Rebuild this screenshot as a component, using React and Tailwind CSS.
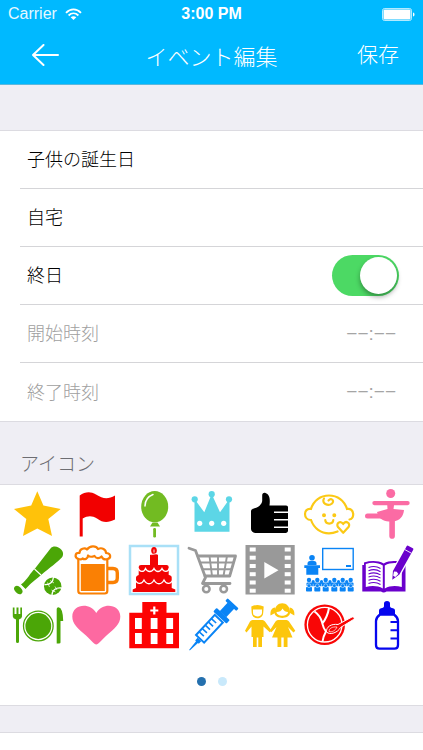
import { useState } from "react";

const Star = () => (
    <polygon fill="#ffc20a" points="25.3,2.3 31.4,16.5 48.7,20 36.3,30 40,47 25.3,39.5 11,47 14.3,30 2,20 19.2,16.5" />
);

const Flag = () => (
    <path fill="#f20000" d="M9.7 6.5C15 3 20 2 26 5.500C33 10 38 10.500 45 6.500V30.500C38 34 33 34 27 29.500C22 26.500 18 26.500 12.700 29.500V47.500H9.700Z" />
);

const Balloon = () => (
    <g>
        <ellipse cx="25.7" cy="17.7" rx="13.5" ry="15.6" fill="#72bb22" />
        <path d="M23.500 33.500H28.500L31 37.500H21Z" fill="#72bb22" />
        <rect x="24.200" y="39" width="2.800" height="9.500" rx="1.200" fill="#72bb22" />
        <path d="M16 17C16 11.500 19 7.500 24 5.500" fill="none" stroke="#fff" strokeWidth="1.500" strokeLinecap="round" />
    </g>
);

const Crown = () => (
    <g fill="#5cd6e6">
        <path d="M7.500 10L17.300 23.300L24.700 5L33 23.300L42.500 10V42.700H7.500Z" />
        <circle cx="7.700" cy="10.300" r="3.100" />
        <circle cx="24.700" cy="5.200" r="3.100" />
        <circle cx="42" cy="10.300" r="3.100" />
        <g fill="#fff">
            <circle cx="12.700" cy="34.300" r="2.600" />
            <circle cx="24.700" cy="34.300" r="2.600" />
            <circle cx="36.700" cy="34.300" r="2.600" />
        </g>
    </g>
);

const Thumb = () => (
    <g>
        <path d="M6 22.500C6 20.500 7 20 9 19.500C13 18.500 16.500 16 17.200 12V6.500C17.200 4.500 18.500 3.500 20.500 4C24 5 25.500 9 24.500 16.500H41C42.500 16.500 43 17.300 43 18.500V41.500C43 43 42 44 40.500 44H11C8 44 6 42 6 40Z" fill="#000" />
        <path d="M29 23.300H43.500M29 30.700H43.500M29 38.300H43.500" stroke="#fff" strokeWidth="1.600" />
    </g>
);

const Baby = () => (
    <g fill="none" stroke="#fbc915" strokeWidth="2.200" strokeLinecap="round">
        <path d="M7 20C9.500 11.500 16.500 6.500 25 6.500S40.500 11.500 43 20C50.500 18.500 51 30 45.500 30.500M7 20C-1 18.500 -1 31 7 31C10 39.500 17 44.300 25 44.300C28 44.300 31 43.500 33.500 42.500" />
        <path d="M20 9.500C17 14 24 18 28 14.500C31 11.500 27 8.500 24.500 11.500" />
        <path d="M21.300 31C21.500 35.700 29 35.700 29.300 31" />
        <circle cx="20" cy="26.300" r="0.900" fill="#fbc915" />
        <circle cx="30.300" cy="26.300" r="0.900" fill="#fbc915" />
        <path d="M39.200 43.800L34 38C31.500 34.500 36.500 30.800 39.200 35C42 30.800 47 34.500 44.500 38Z" strokeLinejoin="round" />
    </g>
);

const Ballerina = () => (
    <g fill="#fb6ba4">
        <circle cx="28.700" cy="4.500" r="4.500" />
        <rect x="10.300" y="12" width="37.400" height="4.200" rx="2.100" />
        <path d="M25 12.500H32.500L31.500 20L42 21C41.500 27 38 32 31 32.500C24 33 18 31 16 26L15 23L25.500 20Z" />
        <rect x="3" y="24.500" width="20" height="5" rx="2.500" />
        <rect x="27.300" y="28" width="5.600" height="21.700" rx="2.800" />
    </g>
);

const Baseball = () => (
    <g>
        <path d="M9 39.500C16 34 18 28 23 23.500L38.500 3.500C43 -2 54 5 50.500 11.500C49 14.500 33 26.500 28.500 30.500C23 35 19 38 13.500 44Z" fill="#4ba607" />
        <ellipse cx="6.300" cy="45" rx="4.800" ry="3.300" transform="rotate(45 6.300 45)" fill="#4ba607" />
        <path d="M22.500 24L29 30M8 40L13 45" stroke="#fff" strokeWidth="1.100" />
        <circle cx="40.700" cy="41.200" r="8.700" fill="#4ba607" />
        <path d="M32.500 39.500C38 40 41 37 41.500 32M49 43C44 42.500 40 45 40 50" fill="none" stroke="#fff" strokeWidth="1.300" />
        <path d="M35.500 37.500L37.500 42M38 35.500L42 38M39.500 45L43.500 47M43 41.500L45 45" stroke="#fff" strokeWidth="0.700" />
    </g>
);

const Beer = () => (
    <g fill="none" stroke="#fa8004" strokeWidth="2.200">
        <path d="M8.300 14V46C8.300 47.700 9.300 48.500 11 48.500H34.700C36.500 48.500 37.300 47.700 37.300 46V14" />
        <rect x="10.800" y="19" width="24" height="27" fill="#fa8004" stroke="none" />
        <path d="M37.500 23.500H43C46 23.500 47.300 25 47.300 28V33C47.300 36 46 37.500 43 37.500H37.500" strokeWidth="3.400" />
        <path d="M8.500 14C4 12.500 5 7.500 9.500 8C9.500 3.500 15 2.500 17 4.500C20 0.500 26 0.500 28 4C32 2 36 4.500 36 8C41 8 41.500 13 37.500 14C34 15.500 32 12.500 31.500 11.500C29 14 26 13.500 24.500 11C22 12 19.500 12 18 10.500C18 14 14.500 15 12.500 13.500C11.500 14.500 10 14.500 8.500 14Z" fill="#fff" strokeLinejoin="round" />
    </g>
);

const Cake = () => (
    <g>
        <path d="M3.700 47V44.500L7 43V32.500Q7 30.500 9.700 30V22Q9.700 20 12 20H21V9H29V20H37.500Q39.700 20 39.700 22V30Q42.700 30.500 42.700 32.500V43L46.300 44.500V47Z" fill="#f20303" />
        <ellipse cx="25" cy="5.500" rx="2.800" ry="3.500" fill="#f20303" />
        <path d="M25 7.500V4.500M21 9.300C24 10.500 27 7.500 29 9.800" stroke="#fff" strokeWidth="0.900" fill="none" />
        <g fill="none" stroke="#fff" strokeWidth="1.300">
            <path d="M9 23C10.500 27.500 15 27.500 16.500 23.500C18.500 27.500 23 27.500 25 23.500C27 27.500 31 27.500 33 23.500C35 27.500 39 27.500 40.500 23" />
            <path d="M6 34.500C8 39.500 13 39.500 15 35C17.500 40 22.500 40 25 35C27.500 40 32.500 40 35 35C37 39.500 42 39.500 44 34.500" />
        </g>
    </g>
);

const Cart = () => (
    <g fill="none" stroke="#999" strokeWidth="2.800" strokeLinejoin="round" strokeLinecap="round">
        <path d="M2 3.200L8.500 5.500L18.500 32.500L15.500 38.500H43" />
        <path d="M11 11H48.500L42.700 31H18" />
        <path d="M14 17.500H46M16 24.300H44M22.500 11L25 31M31 11V31M40 11L36.500 31" strokeWidth="1.900" />
        <circle cx="19.300" cy="44" r="3.300" strokeWidth="2.500" />
        <circle cx="36.700" cy="44" r="3.300" strokeWidth="2.500" />
    </g>
);

const Film = () => (
    <g>
        <rect x="0.500" y="0" width="49.200" height="49.500" fill="#999" />
        {[2.5, 10.7, 19, 27.2, 35.5, 43.7].map((y) => (
            <g key={y} fill="#fff">
                <rect x="4.700" y={y} width="6" height="4" />
                <rect x="39.700" y={y} width="6" height="4" />
            </g>
        ))}
        <polygon points="19.300,17 19.300,33.500 33.500,25.200" fill="#fff" />
    </g>
);

const Lecture = () => (
    <g fill="#0a84f5">
        <rect x="18.700" y="3.500" width="30.500" height="21" fill="none" stroke="#0a84f5" strokeWidth="1.400" />
        <rect x="42" y="20" width="5" height="2" />
        <circle cx="8" cy="12.800" r="2.800" />
        <path d="M3.500 20V18.500Q3.500 16 6 16H10Q12.500 16 12.500 18.500V20Z" />
        <path d="M0.300 20.300H16V23H14.300V29.700H2.300V23H0.300Z" />
        <rect x="2.500" y="37.500" width="47" height="3.700" rx="1" />
        {[5, 13.3, 21.7, 30.3, 38.7, 46.7].map((x) => (
            <g key={x}>
                <circle cx={x} cy="35" r="2.200" />
                <rect x={x - 3} y="42" width="6" height="4.500" rx="0.800" />
                <circle cx={x} cy="40.700" r="1.900" stroke="#fff" strokeWidth="0.500" />
            </g>
        ))}
        {[9.2, 17.5, 26, 34.5, 42.7].map((x) => (
            <circle key={x} cx={x} cy="36.700" r="1.600" />
        ))}
        <path d="M9.200 38.800V41.500M17.500 38.800V41.500M26 38.800V41.500M34.500 38.800V41.500M42.700 38.800V41.500" stroke="#fff" strokeWidth="0.500" />
    </g>
);

const Notebook = () => (
    <g fill="#6a00cc">
        <path d="M0.300 20H2V17.500C9 15.500 16 15.500 21.700 18.500C27 15.500 34 15.500 41.500 17.500V20H43.500V46.500H24.500Q21.700 48.500 19 46.500H0.300Z" />
        <path d="M3.800 19C10 17 16 17.500 20.800 20.500V43.500C16 40.500 9 40.500 3.800 42ZM22.800 20.500C28 17.500 34 17.500 39.800 19V42C34 40.500 28 40.500 22.800 43.500Z" fill="#fff" />
        <path d="M6.500 22.500Q13 20 18.500 23.500M6.500 25.700Q13 23.200 18.500 26.700M6.500 28.900Q13 26.400 18.500 29.900M6.500 32.100Q13 29.600 18.500 33.100M6.500 35.300Q13 32.800 18.500 36.300M6.500 38.500Q13 36 18.500 39.500" fill="none" stroke="#6a00cc" strokeWidth="1.100" />
        <g transform="translate(30.300 34.800) rotate(29)">
            <path d="M-5 -8V-38Q-5 -39 -4 -39H4Q5 -39 5 -38V-8L0 1Z" fill="#fff" />
            <path d="M-3.700 -8V-36.500Q-3.700 -37.500 -2.700 -37.500H2.700Q3.700 -37.500 3.700 -36.500V-8L0 0Z" />
            <path d="M-2.500 -8L0 -9.200L2.500 -8L1.200 -4H-1.200Z" fill="#fff" />
            <path d="M-3.700 -32.500H3.700" stroke="#fff" strokeWidth="0.800" />
        </g>
    </g>
);

const Meal = () => (
    <g fill="#4ba607">
        <path d="M0.800 6.500H2.500V13H4.500V6.500H6.500V13H8.300V6.500H10V15.500Q10 17.500 7 18.500V40.500Q7 42 5.500 42T4 40.500V18.500Q0.800 17.500 0.800 15.500Z" />
        <circle cx="26.300" cy="25" r="12.900" />
        <circle cx="26.300" cy="25" r="14.800" fill="none" stroke="#4ba607" strokeWidth="1.300" />
        <path d="M44.700 8Q44.700 6.300 46.500 6.300Q51 7 51.200 20H48.500V41.500Q48.500 42.500 47 42.500H44.700Z" />
    </g>
);

const Heart = () => (
    <path fill="#fd69a1" d="M26.300 43.500C24 43.500 22 40 16 34.500C8 27.500 2.300 23 2.300 15.500C2.300 3.500 19.500 0.500 26.300 12C33 0.500 50.300 3.500 50.300 15.500C50.300 23 44.500 27.500 36.500 34.500C30.500 40 28.500 43.500 26.300 43.500Z" />
);

const Hospital = () => (
    <g>
        <path d="M0.300 11.700H13.300V1H37.500V11.700H50V47.300H0.300Z" fill="#fd0202" />
        <path d="M25.300 5.500V13.500M21.300 9.500H29.300" stroke="#fff" strokeWidth="2.200" />
        {[6, 21.7, 37.3].map((x) => (
            <g key={x} fill="#fff">
                <rect x={x} y="17" width="6.800" height="11" />
                <rect x={x} y="32" width="6.800" height="11" />
            </g>
        ))}
    </g>
);

const Syringe = () => (
    <g transform="translate(25 25) rotate(43)" fill="#0a84f5">
        <path d="M-2.500 18.500H2.500V22H1.300L0.400 33H-0.400L-1.300 22H-2.500Z" />
        <rect x="-5.500" y="-10" width="11" height="27.500" fill="none" stroke="#0a84f5" strokeWidth="2" />
        <path d="M-5.500 -5H1M-5.500 -0.500H1M-5.500 4H1M-5.500 8.500H1M-5.500 13H1" stroke="#0a84f5" strokeWidth="1.600" />
        <rect x="-9" y="-16.500" width="18" height="5" rx="1" />
        <rect x="-4.500" y="-28" width="9" height="12" />
        <rect x="-7.500" y="-31" width="15" height="3.500" rx="1" />
    </g>
);

const Kids = () => (
    <g fill="#fcc60c">
        <path d="M6.300 5.500Q12.500 2.500 18.700 5.500L18.200 12C17.500 19 7.500 19 6.700 12Z" />
        <path d="M8 8.500H17V12C16.500 16.500 8.500 16.500 8 12Z" fill="#fff" />
        <path d="M7.500 19H17.500Q19 19 20 20.500L26.500 29.500L24.800 31.300L18.500 25.500V36H17V46H13.300V36.500H11.700V46H8V36H6.500V25.500L1.500 31.500L0 29.700L5 20.500Q6 19 7.500 19Z" />
        <path d="M29.500 12C29 -1 45.500 -1 45 12C44 18.500 30.500 18.500 29.500 12Z" />
        <path d="M31.500 11Q36 11 37.500 7.500Q39.500 11 43 11C42.500 16 32 16 31.500 11Z" fill="#fff" />
        <path d="M30 6.500C26.500 7 25 10 25.500 14.500L30 12ZM44.500 6.500C48 7 50 10 49.300 14.500L45 12Z" />
        <path d="M33 19H41.500Q43 19 44 20.500L50.300 29.700L48.500 31.500L43 26L47.500 36.500H42.500V46H38.700V36.500H36.300V46H32.500V36.500H27L31.500 26L26.300 31.300L24.800 29.500L30.500 20.500Q31.500 19 33 19Z" />
    </g>
);

const BabyFood = () => (
    <g>
        <circle cx="20.700" cy="23.700" r="20.300" fill="#f90606" />
        <circle cx="20.700" cy="23.700" r="17.300" fill="none" stroke="#fff" strokeWidth="1.300" />
        <path d="M10.500 10.500C14 13 16.500 16 18 21C19 25 19 27 22 30.500C20 34 19 36 18.500 40.500M18 23C22 18 24 13 25 7" fill="none" stroke="#fff" strokeWidth="2" />
        <path d="M22.500 31C22 26 27 22.500 34 23.500L48 16C50 15.500 51 17.500 49.500 18.500L36.500 26.500C34 31.500 26 34.500 22.500 31Z" fill="#f90606" stroke="#fff" strokeWidth="1" />
        <path d="M25 30.500C25 27.500 28 25.500 33 26C31.500 29.500 28 31.500 25 30.500Z" fill="none" stroke="#fff" strokeWidth="0.700" />
    </g>
);

const Bottle = () => (
    <g>
        <path d="M17 13V9.500Q17 7.500 19 7.300Q22 7 22 5V2.500Q22 0 25 0T28 2.500V5Q28 7 31 7.300Q33 7.500 33 9.500V13Z" fill="#0606ee" />
        <path d="M18 13.500H32Q36 16.500 36 20V44Q36 47.700 32.500 47.700H17.500Q14 47.700 14 44V20Q14 16.500 18 13.500Z" fill="none" stroke="#0606ee" strokeWidth="2.300" />
        <path d="M28.500 21H36M28.500 29.300H36M28.500 37.500H36" stroke="#0606ee" strokeWidth="2.100" />
    </g>
);

const icons = [
    { label: "星", Icon: Star },
    { label: "旗", Icon: Flag },
    { label: "風船", Icon: Balloon },
    { label: "王冠", Icon: Crown },
    { label: "いいね", Icon: Thumb },
    { label: "赤ちゃん", Icon: Baby },
    { label: "バレエ", Icon: Ballerina },
    { label: "野球", Icon: Baseball },
    { label: "ビール", Icon: Beer },
    { label: "ケーキ", Icon: Cake },
    { label: "買い物", Icon: Cart },
    { label: "映画", Icon: Film },
    { label: "講演", Icon: Lecture },
    { label: "ノート", Icon: Notebook },
    { label: "食事", Icon: Meal },
    { label: "ハート", Icon: Heart },
    { label: "病院", Icon: Hospital },
    { label: "注射", Icon: Syringe },
    { label: "子供", Icon: Kids },
    { label: "離乳食", Icon: BabyFood },
    { label: "哺乳瓶", Icon: Bottle },
];

const StatusBar = () => (
    <div className="grid h-7 grid-cols-3 items-center px-2 font-['Liberation_Sans',sans-serif] text-base text-white">
        <div className="flex items-center gap-2">
            <span className="opacity-90">Carrier</span>
            <svg width="17" height="13" viewBox="0 0 17 13" fill="none" stroke="#fff" strokeWidth="1.800">
                <path d="M1 4.800C5.500 0.300 11.500 0.300 16 4.800M3.600 7.500C6.500 4.700 10.500 4.700 13.400 7.500" />
                <path d="M8.500 12L5.700 9.300C7.200 7.800 9.800 7.800 11.300 9.300Z" fill="#fff" stroke="none" />
            </svg>
        </div>
        <span className="text-center font-bold">3:00 PM</span>
        <svg className="justify-self-end" width="33" height="13" viewBox="0 0 33 13">
            <rect x="0.500" y="0.500" width="29" height="12" rx="2" fill="none" stroke="#fff" strokeOpacity="0.700" />
            <rect x="1.500" y="1.500" width="27" height="10" rx="1" fill="#fff" />
            <path d="M31 4.500C33 5 33 8 31 8.500Z" fill="#fff" />
        </svg>
    </div>
);

const Header = () => (
    <header className="border-b border-[#5cb8dd] bg-[#00b9ff]">
        <StatusBar />
        <div className="grid h-14 grid-cols-[1fr_auto_1fr] items-center px-6 pb-0.5 text-white">
            <button type="button" aria-label="戻る" className="justify-self-start px-2">
                <svg width="27" height="22" viewBox="0 0 27 22" fill="none" stroke="#fff" strokeWidth="2" strokeLinecap="round" strokeLinejoin="round">
                    <path d="M11.500 1L1 11L11.500 21M1 11H26" />
                </svg>
            </button>
            <h1 className="text-[22px] font-light">イベント編集</h1>
            <button type="button" className="justify-self-end pb-1 text-[21px] font-light">保存</button>
        </div>
    </header>
);

const Row = ({ children, last }) => (
    <div className={last ? "flex h-[58px] items-center justify-between pr-6 pl-[7px]" : "flex h-[58px] items-center justify-between border-b border-[#d5d5d8] pr-6 pl-[7px]"}>
        {children}
    </div>
);

function App() {
    const [title, setTitle] = useState("子供の誕生日");
    const [place, setPlace] = useState("自宅");
    const [allDay, setAllDay] = useState(true);
    const [selected, setSelected] = useState("ケーキ");
    const [page, setPage] = useState(0);

    const timeClass = "pr-[3px] font-['Liberation_Sans',sans-serif] text-[19px] text-black disabled:text-[#a5a5a5]";
    const timeLabel = allDay ? "pb-[3px] text-[#a0a0a0]" : "pb-[3px] text-black";

    return (
        <div className="min-h-screen bg-[#efeef4] font-['Noto_Sans_CJK_JP',sans-serif] text-lg font-light text-black">
            <Header />

            <form className="mt-[45px]" onSubmit={(e) => e.preventDefault()}>
                <div className="border-y border-[#dcdbe1] bg-white pl-5">
                    <Row>
                        <input
                            type="text"
                            aria-label="タイトル"
                            value={title}
                            onChange={(e) => setTitle(e.target.value)}
                            className="w-full bg-transparent pb-[3px] outline-none"
                        />
                    </Row>
                    <Row>
                        <input
                            type="text"
                            aria-label="場所"
                            value={place}
                            onChange={(e) => setPlace(e.target.value)}
                            className="w-full bg-transparent pb-[3px] outline-none"
                        />
                    </Row>
                    <Row>
                        <label htmlFor="allDay" className="pb-[3px]">終日</label>
                        <input
                            type="checkbox"
                            role="switch"
                            id="allDay"
                            checked={allDay}
                            onChange={(e) => setAllDay(e.target.checked)}
                            className="flex h-[41px] w-[67px] appearance-none items-center rounded-full bg-gray-200 px-0.5 before:size-[37px] before:rounded-full before:bg-white before:shadow-[0_3px_5px_rgba(0,0,0,0.35)] checked:justify-end checked:bg-[#4cd964]"
                        />
                    </Row>
                    <Row>
                        <label htmlFor="start" className={timeLabel}>開始時刻</label>
                        <button type="button" id="start" disabled={allDay} className={timeClass}>−−:−−</button>
                    </Row>
                    <Row last>
                        <label htmlFor="end" className={timeLabel}>終了時刻</label>
                        <button type="button" id="end" disabled={allDay} className={timeClass}>−−:−−</button>
                    </Row>
                </div>

                <h2 className="flex h-[62px] items-end px-5 pb-[7px] text-[19px] leading-7 text-[#6d6d72]">アイコン</h2>

                <div className="flex h-[222px] flex-col justify-between border-y border-[#dcdbe1] bg-white pt-px pr-[7px] pb-[19px] pl-2">
                    <div className="grid grid-cols-7">
                        {icons.map(({ label, Icon }) => (
                            <button
                                key={label}
                                type="button"
                                aria-label={label}
                                aria-pressed={selected === label}
                                onClick={() => setSelected(label)}
                                className="flex h-14 items-center justify-center"
                            >
                                <svg width="50" height="50" viewBox="0 0 50 50" overflow="visible">
                                    {selected === label && (
                                        <rect x="1" y="1" width="48" height="48" fill="none" stroke="#a9e0f7" strokeWidth="2.500" />
                                    )}
                                    <Icon />
                                </svg>
                            </button>
                        ))}
                    </div>
                    <div className="flex justify-center gap-3">
                        {[0, 1].map((n) => (
                            <button
                                key={n}
                                type="button"
                                aria-label={`${n + 1}ページ`}
                                onClick={() => setPage(n)}
                                className={page === n ? "size-[9px] rounded-full bg-[#2470ae]" : "size-[9px] rounded-full bg-[#c9e9fb]"}
                            />
                        ))}
                    </div>
                </div>

                <div className="mt-[26px] h-[18px] border-t border-[#dcdbe1] bg-white" />
            </form>
        </div>
    );
}

export default App;
